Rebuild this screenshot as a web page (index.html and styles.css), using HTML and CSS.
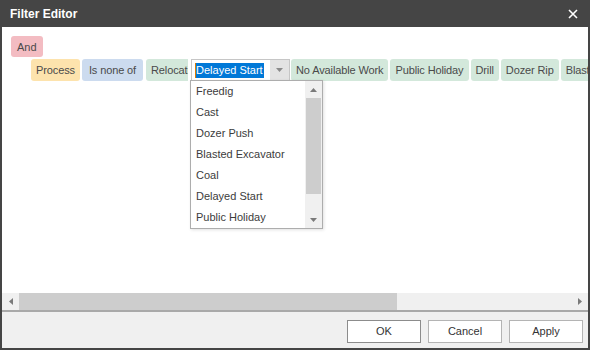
FILE: index.html
```html
<!DOCTYPE html>
<html>
<head>
<meta charset="utf-8">
<link rel="stylesheet" href="styles.css">
</head>
<body>
<div class="window">
  <div class="titlebar">
    <span class="title">Filter Editor</span>
    <svg class="close" width="10" height="10" viewBox="0 0 10 10"><path d="M1 1 L9 9 M9 1 L1 9" stroke="#fff" stroke-width="1.6"/></svg>
  </div>
  <div class="content">
    <div class="canvas">
      <div class="row1"><span class="chip and">And</span></div>
      <div class="row2">
        <span class="chip field">Process</span>
        <span class="chip op">Is none of</span>
        <span class="chip val clipped">Relocation</span>
        <div class="editor">
          <span class="sel"><span class="caret"></span>Delayed Start</span>
          <span class="ddbtn"><svg width="7" height="4" viewBox="0 0 7 4"><path d="M0 0 H7 L3.5 4 Z" fill="#8a8a8a"/></svg></span>
        </div>
        <span class="chip val">No Available Work</span>
        <span class="chip val">Public Holiday</span>
        <span class="chip val">Drill</span>
        <span class="chip val">Dozer Rip</span>
        <span class="chip val">Blasted Excavator</span>
      </div>
      <div class="popup">
        <ul class="items">
          <li>Freedig</li>
          <li>Cast</li>
          <li>Dozer Push</li>
          <li>Blasted Excavator</li>
          <li>Coal</li>
          <li>Delayed Start</li>
          <li>Public Holiday</li>
        </ul>
        <div class="vscroll">
          <span class="arr"><svg width="7" height="4" viewBox="0 0 7 4"><path d="M3.5 0 L7 4 H0 Z" fill="#7a7a7a"/></svg></span>
          <div class="vtrack"><div class="vthumb"></div></div>
          <span class="arr"><svg width="7" height="4" viewBox="0 0 7 4"><path d="M0 0 H7 L3.5 4 Z" fill="#7a7a7a"/></svg></span>
        </div>
      </div>
    </div>
    <div class="hscroll">
      <span class="harr"><svg width="4" height="7" viewBox="0 0 4 7"><path d="M4 0 V7 L0 3.5 Z" fill="#7a7a7a"/></svg></span>
      <div class="htrack"><div class="hthumb"></div></div>
      <span class="harr"><svg width="4" height="7" viewBox="0 0 4 7"><path d="M0 0 V7 L4 3.5 Z" fill="#7a7a7a"/></svg></span>
    </div>
    <div class="footer">
      <button class="btn default">OK</button>
      <button class="btn">Cancel</button>
      <button class="btn">Apply</button>
    </div>
  </div>
</div>
</body>
</html>
```
FILE: styles.css
```css
* { box-sizing: border-box; }
html, body { margin: 0; padding: 0; }
body {
  width: 590px;
  height: 350px;
  overflow: hidden;
  font-family: "Liberation Sans", Arial, sans-serif;
  font-size: 11px;
  color: #444;
}
.window {
  width: 590px;
  height: 350px;
  display: flex;
  flex-direction: column;
  background: #454545;
}
.titlebar {
  height: 27px;
  flex: none;
  display: flex;
  align-items: center;
  justify-content: space-between;
  padding: 0 12px 0 10px;
  color: #fff;
}
.title { font-weight: bold; font-size: 12px; }
.close { display: block; }
.content {
  flex: 1;
  display: flex;
  flex-direction: column;
  margin: 0 2px 2px 2px;
  background: #fff;
  min-height: 0;
}
.canvas {
  flex: 1;
  position: relative;
  overflow: hidden;
  padding-top: 9px;
}
.row1 { padding-left: 9px; display: flex; }
.row2 {
  display: flex;
  gap: 2px;
  padding-left: 29px;
  margin-top: 2px;
  white-space: nowrap;
  width: 800px;
}
.chip {
  display: inline-flex;
  align-items: center;
  height: 22px;
  padding: 0 5px;
  border-radius: 3px;
  color: #4a4a4a;
  flex: none;
  letter-spacing: -0.12px;
}
.and { background: #f3bcc2; height: 21px; padding: 0 6px; letter-spacing: 0; }
.field { background: #fde3ad; }
.op { background: #ccdbef; padding: 0 7px; }
.val { background: #d3e8db; }
.clipped {
  width: 42px;
  overflow: hidden;
  border-radius: 3px 0 0 3px;
  margin-left: 1px;
  margin-right: 1px;
}
.editor {
  flex: none;
  width: 99px;
  height: 22px;
  border: 1px solid #c6c6c6;
  background: #fff;
  display: flex;
  align-items: center;
  padding-left: 3px;
  margin-right: -1px;
}
.sel {
  position: relative;
  background: #0078d7;
  color: #fff;
  height: 15px;
  line-height: 15px;
  padding: 0 1px;
}
.caret {
  position: absolute;
  left: 0;
  top: 0;
  width: 1px;
  height: 15px;
  background: #e07b00;
}
.ddbtn {
  margin-left: auto;
  width: 19px;
  height: 20px;
  background: #e3e3e3;
  display: flex;
  align-items: center;
  justify-content: center;
}
.popup {
  position: absolute;
  left: 188px;
  top: 53px;
  width: 133px;
  height: 149px;
  border: 1px solid #adadad;
  background: #fff;
  display: flex;
  box-shadow: 1px 1px 3px rgba(0,0,0,0.12);
}
.items {
  list-style: none;
  margin: 0;
  padding: 0;
  flex: 1;
}
.items li {
  height: 21px;
  line-height: 21px;
  padding-left: 5px;
  color: #3c3c3c;
}
.vscroll {
  width: 17px;
  background: #f0f0f0;
  display: flex;
  flex-direction: column;
}
.arr {
  height: 17px;
  display: flex;
  align-items: center;
  justify-content: center;
  flex: none;
}
.vtrack { flex: 1; }
.vthumb {
  height: 96px;
  background: #cdcdcd;
  margin: 0 1px;
}
.hscroll {
  height: 17px;
  flex: none;
  background: #f0f0f0;
  display: flex;
  align-items: center;
  border-bottom: 2px solid #a9a9a9;
  box-sizing: content-box;
}
.harr {
  width: 17px;
  height: 17px;
  display: flex;
  align-items: center;
  justify-content: center;
  flex: none;
}
.htrack { flex: 1; height: 17px; }
.hthumb {
  width: 378px;
  height: 17px;
  background: #cdcdcd;
}
.footer {
  height: 36px;
  flex: none;
  background: #f0f0f0;
  display: flex;
  justify-content: flex-end;
  align-items: center;
  gap: 7px;
  padding-right: 5px;
  padding-top: 2px;
}
.btn {
  width: 74px;
  height: 23px;
  background: #fff;
  border: 1px solid #b4b4b4;
  font-family: "Liberation Sans", Arial, sans-serif;
  font-size: 11px;
  color: #333;
  padding: 0;
}
.btn.default { border-color: #8c8c8c; }
```
